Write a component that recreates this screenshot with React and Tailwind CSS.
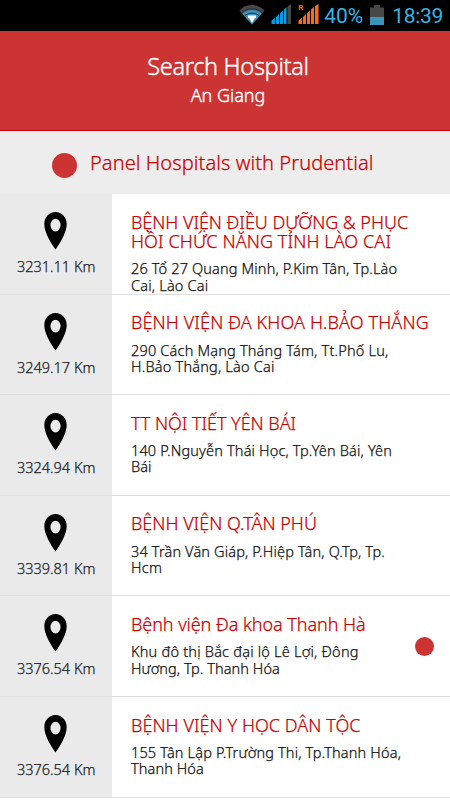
const HOSPITALS = [
    {
        distance: "3231.11 Km",
        name: [
            { text: "BỆNH VIỆN ĐIỀU DƯỠNG & PHỤC", tracking: "tracking-[-0.04px]" },
            { text: "HỒI CHỨC NĂNG TỈNH LÀO CAI", tracking: "tracking-[0.1px]" },
        ],
        address: [
            { text: "26 Tổ 27 Quang Minh, P.Kim Tân, Tp.Lào", tracking: "tracking-[0.15px]" },
            { text: "Cai, Lào Cai", tracking: "tracking-[0.2px]" },
        ],
    },
    {
        distance: "3249.17 Km",
        name: [{ text: "BỆNH VIỆN ĐA KHOA H.BẢO THẮNG", tracking: "tracking-[0.12px]" }],
        address: [
            { text: "290 Cách Mạng Tháng Tám, Tt.Phố Lu,", tracking: "tracking-[0.19px]" },
            { text: "H.Bảo Thắng, Lào Cai", tracking: "tracking-[0.2px]" },
        ],
    },
    {
        distance: "3324.94 Km",
        name: [{ text: "TT NỘI TIẾT YÊN BÁI", tracking: "tracking-[-0.05px]" }],
        address: [
            { text: "140 P.Nguyễn Thái Học, Tp.Yên Bái, Yên", tracking: "tracking-[0.16px]" },
            { text: "Bái", tracking: "tracking-[0.1px]" },
        ],
    },
    {
        distance: "3339.81 Km",
        name: [{ text: "BỆNH VIỆN Q.TÂN PHÚ", tracking: "tracking-[0px]" }],
        address: [
            { text: "34 Trần Văn Giáp, P.Hiệp Tân, Q.Tp, Tp.", tracking: "tracking-[0.15px]" },
            { text: "Hcm", tracking: "tracking-[0.3px]" },
        ],
    },
    {
        distance: "3376.54 Km",
        panel: true,
        name: [{ text: "Bệnh viện Đa khoa Thanh Hà", tracking: "tracking-[-0.05px]" }],
        address: [
            { text: "Khu đô thị Bắc đại lộ Lê Lợi, Đông", tracking: "tracking-[0.22px]" },
            { text: "Hương, Tp. Thanh Hóa", tracking: "tracking-[0.07px]" },
        ],
    },
    {
        distance: "3376.54 Km",
        name: [{ text: "BỆNH VIỆN Y HỌC DÂN TỘC", tracking: "tracking-[0.05px]" }],
        address: [
            { text: "155 Tân Lập P.Trường Thi, Tp.Thanh Hóa,", tracking: "tracking-[0.16px]" },
            { text: "Thanh Hóa", tracking: "tracking-[0.1px]" },
        ],
    },
];

function StatusBar() {
    return (
        <div className="h-[31px] shrink-0 bg-black flex items-start justify-end pr-[7px] text-[#33b5e5] font-normal font-['Roboto',sans-serif] [-webkit-text-stroke:0px]">
            {/* Wifi */}
            <svg className="mt-[4px] mr-[6px]" width="26" height="21" viewBox="0 0 26 21">
                <path d="M0.5 6.5C7 -0.8 19 -0.8 25.5 6.5L13 20.5Z" fill="#484848" />
                <path d="M3.4 9.7C8.5 4.6 17.5 4.6 22.6 9.7L13 20.5Z" fill="#3a94ba" />
                <path d="M2.6 8.8C8 3.4 18 3.4 23.4 8.8M5.4 12C9.5 8.2 16.5 8.2 20.6 12" fill="none" stroke="#1b3540" strokeWidth="1" />
                <path d="M9 11.5H17V14H15.8L13 19L10.2 14H9Z" fill="#fff" />
            </svg>
            {/* SIM 1 */}
            <svg className="mt-[4px] mr-[6px]" width="21" height="21" viewBox="0 0 21 21">
                <path d="M0.5 20V16.5L4 13.8V20ZM5 20V13L8 10V20ZM9 20V9.2L12 6.2V20ZM13 20V5.4L15.5 3V20Z" fill="#0b98e4" />
                <path d="M16.5 20V2.5L20 0V20Z" fill="#484848" />
            </svg>
            {/* SIM 2, roaming */}
            <div className="relative w-[21px] h-[25px] mr-[5px]">
                <span className="absolute left-0 top-[3px] text-[8px] leading-[9px] font-bold text-[#ff6c0c]">R</span>
                <svg className="absolute left-0 top-[4px]" width="21" height="21" viewBox="0 0 21 21">
                    <path d="M0.5 20V16.5L4 13.8V20ZM5 20V13L8 10V20ZM9 20V9.2L12 6.2V20ZM13 20V5.4L16 3V20ZM17 20V2L20.5 0V20Z" fill="#ff6c0c" />
                </svg>
            </div>
            <span className="text-[21px] leading-[31px] mt-px mr-[7px]">40%</span>
            {/* Battery */}
            <svg className="mt-[5px] mr-[8px]" width="14" height="20" viewBox="0 0 14 20">
                <path d="M4 0H10V2.5H14V12H0V2.5H4Z" fill="#484848" />
                <path d="M0 12H14V20H0Z" fill="#3a94ba" />
            </svg>
            <span className="text-[21px] leading-[31px] mt-px tracking-[-0.3px]">18:39</span>
        </div>
    );
}

function PinIcon() {
    return (
        <svg className="-ml-px" width="23" height="38" viewBox="0 0 23 38">
            <path
                fillRule="evenodd"
                d="M11.5 0C17.8 0 22.7 5 22.7 12.2C22.7 20 16.5 30.5 11.5 37.5C6.5 30.5 0.3 20 0.3 12.2C0.3 5 5.2 0 11.5 0ZM11.5 6.8A5.1 6.3 0 1 0 11.5 19.4A5.1 6.3 0 1 0 11.5 6.8Z"
                fill="#000"
            />
        </svg>
    );
}

function HospitalRow({ hospital }) {
    return (
        <li className="h-[100.6px] shrink-0 flex border-b border-[#e0e0e0] bg-white">
            <div className="w-[112.4px] shrink-0 bg-[#eaeaea] flex flex-col items-center pt-[18px]">
                <PinIcon />
                <span className="mt-[6px] text-[14.5px] leading-5 whitespace-nowrap text-[#222]">
                    {hospital.distance}
                </span>
            </div>
            <div className="flex-1 min-w-0 pl-[18.6px] pt-[18.5px] whitespace-nowrap">
                <h3 className="text-[18px] leading-[19.4px] text-[#cc0000]">
                    {hospital.name.map((line) => (
                        <span key={line.text} className={`block ${line.tracking}`}>{line.text}</span>
                    ))}
                </h3>
                <p className="mt-[9px] text-[14.5px] leading-[16.3px] text-[#111]">
                    {hospital.address.map((line) => (
                        <span key={line.text} className={`block ${line.tracking}`}>{line.text}</span>
                    ))}
                </p>
            </div>
            {hospital.panel && (
                <span className="self-center shrink-0 mr-[16px] size-[19px] rounded-full bg-[#cc3333]" />
            )}
        </li>
    );
}

export default function App() {
    return (
        <div className="w-[450px] h-[800px] overflow-hidden flex flex-col bg-white font-light font-['Noto_Sans',sans-serif] [-webkit-text-stroke:0.25px]">
            <StatusBar />
            <header className="h-[100px] shrink-0 bg-[#cc3333] border-b border-[#cc0000] text-white flex flex-col items-center pt-[20px] pl-[6px] [-webkit-text-stroke:0.4px]">
                <h1 className="text-[23.5px] leading-[30px] tracking-[-0.3px]">Search Hospital</h1>
                <p className="text-[18px] leading-[28px]">An Giang</p>
            </header>
            <div className="h-[63.1px] shrink-0 bg-[#ededed] flex items-center pl-[52px]">
                <span className="size-[25px] mt-[6px] rounded-full bg-[#cc3333]" />
                <h2 className="ml-[13px] text-[20px] leading-7 tracking-[0.08px] text-[#cc0000]">Panel Hospitals with Prudential</h2>
            </div>
            <ul className="flex flex-col">
                {HOSPITALS.map((hospital) => (
                    <HospitalRow key={hospital.name[0].text} hospital={hospital} />
                ))}
            </ul>
        </div>
    );
}
